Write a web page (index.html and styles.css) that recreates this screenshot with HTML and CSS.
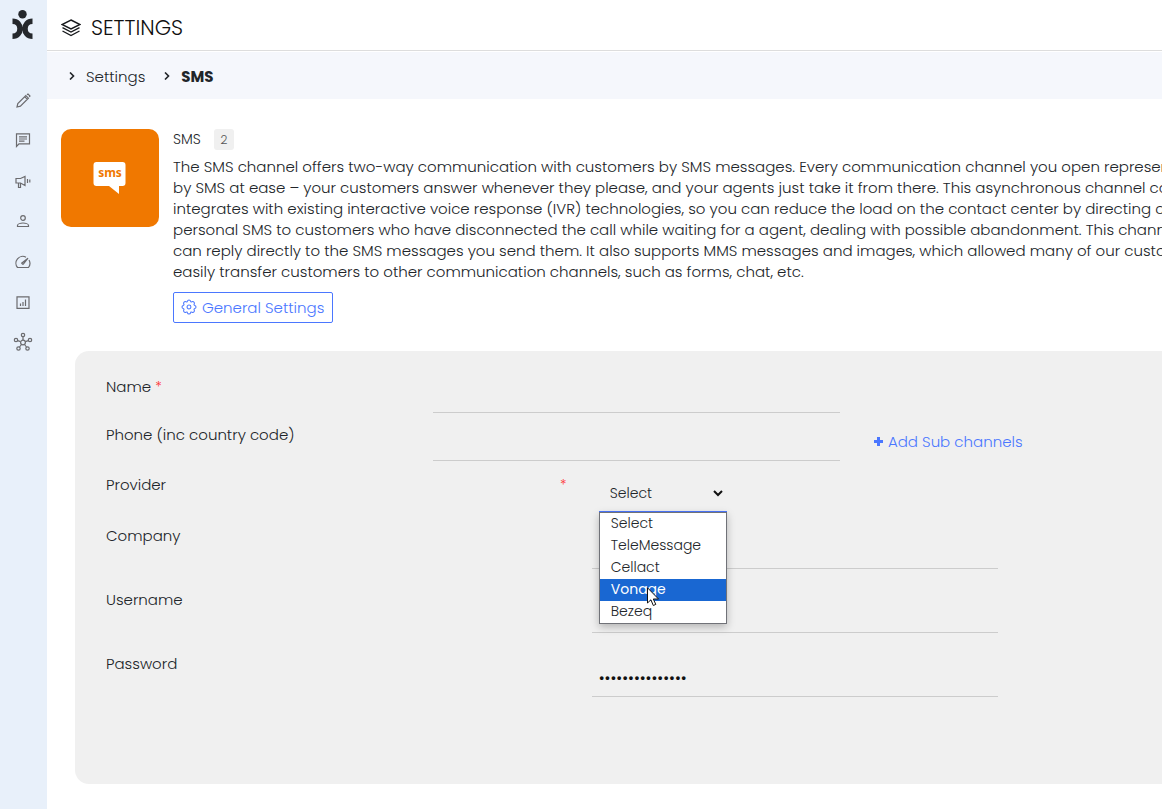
FILE: index.html
```html
<!DOCTYPE html>
<html lang="en">
<head>
<meta charset="utf-8">
<title>Settings</title>
<link rel="stylesheet" href="styles.css">
</head>
<body>
<div class="app">
  <nav class="sidebar" aria-label="Main">
    <a class="logo" href="#" aria-label="Home">
      <svg width="21" height="30" viewBox="0 0 21 30"><circle cx="10.500" cy="4.200" r="4.200" fill="#25282c"/><path d="M.5 11.200C5.500 11.200 8 14.800 8 18.700S5.500 26.200 .5 26.200M20.500 11.200C15.500 11.200 13 14.800 13 18.700S15.500 26.200 20.500 26.200" stroke="#25282c" stroke-width="5.500"/></svg>
    </a>
    <a class="nav-item" href="#" aria-label="Compose"><svg width="16" height="16" viewBox="0 0 16 16"><path d="M2 14l.8-3.400L10.800 2.600l2.600 2.600-8 8zM9.700 3.700l2.600 2.600M12 1.800l1-.8 2 2-.8 1"/></svg></a>
    <a class="nav-item" href="#" aria-label="Chats"><svg width="16" height="16" viewBox="0 0 16 16"><path d="M1.500 13.500V.8h13v10H4zM4 3.800h8M4 6h8M4 8.200h5.500"/></svg></a>
    <a class="nav-item" href="#" aria-label="Campaigns"><svg width="16" height="16" viewBox="0 0 16 16"><path d="M1 5.500h4.500L10 3.500v9L5.500 10H1zM3.500 10v4.500h2V10M12.500 6v4M14.800 6.500v3"/></svg></a>
    <a class="nav-item" href="#" aria-label="Contacts"><svg width="16" height="16" viewBox="0 0 16 16"><circle cx="8" cy="5" r="2.300"/><path d="M2.500 13.500v-1c0-1.500 3-2.500 5.500-2.500s5.500 1 5.500 2.500v1z"/></svg></a>
    <a class="nav-item" href="#" aria-label="Performance"><svg width="16" height="16" viewBox="0 0 16 16"><path d="M11 4.200A6.800 6.800 0 0 0 2.500 14.500h11A6.800 6.800 0 0 0 14 7M7.500 11.200l-.8-1L13 5.200 8.300 11.200z"/></svg></a>
    <a class="nav-item" href="#" aria-label="Reports"><svg width="16" height="16" viewBox="0 0 16 16"><path d="M2 3.800h12v11.500H2zM5.500 10.500V13M8 9v4M10.500 6.500V13"/></svg></a>
    <a class="nav-item" href="#" aria-label="Integrations"><svg width="20" height="20" viewBox="0 -1 20 20"><circle cx="10" cy="10.500" r="2.400"/><circle cx="10" cy="3" r="1.700"/><circle cx="3" cy="8" r="1.700"/><circle cx="17" cy="8" r="1.700"/><circle cx="5.500" cy="16.500" r="1.700"/><circle cx="14.500" cy="16.500" r="1.700"/><path d="M10 4.700v3.400M4.600 8.600l3 1M15.400 8.600l-3 1M6.500 15l2-2.500M13.500 15l-2-2.500"/></svg></a>
  </nav>

  <main class="main">
    <header class="header">
      <svg class="layers" width="20" height="18" viewBox="0 0 20 18"><path d="M10 1l9 4.500-9 4.500-9-4.500zM1.500 8.700L10 13l8.500-4.300M1.500 12L10 16.500l8.500-4.500"/></svg>
      <h1 class="title">SETTINGS</h1>
    </header>
    <nav class="crumbs" aria-label="Breadcrumb">
      <svg class="chevron" width="6" height="8" viewBox="0 0 6 8"><path d="M1 .5L4.500 4 1 7.500"/></svg>
      <a class="crumb" href="#">Settings</a>
      <svg class="chevron" width="6" height="8" viewBox="0 0 6 8"><path d="M1 .5L4.500 4 1 7.500"/></svg>
      <strong class="crumb-current">SMS</strong>
    </nav>

    <section class="channel">
      <div class="tile">
        <svg width="34" height="32" viewBox="0 0 34 32"><path d="M3.500 0h26a3 3 0 0 1 3 3v18a3 3 0 0 1-3 3H26v8L16 24H3.500a3 3 0 0 1-3-3V3a3 3 0 0 1 3-3z" fill="#fff"/><text class="tile-text" x="17" y="15" text-anchor="middle">sms</text></svg>
      </div>
      <div class="channel-info">
        <div class="channel-head"><h2 class="channel-name">SMS</h2><span class="badge">2</span></div>
        <p class="description">The SMS channel offers two-way communication with customers by SMS messages. Every communication channel you open represents
by SMS at ease – your customers answer whenever they please, and your agents just take it from there. This asynchronous channel can
integrates with existing interactive voice response (IVR) technologies, so you can reduce the load on the contact center by directing calls
personal SMS to customers who have disconnected the call while waiting for a agent, dealing with possible abandonment. This channel
can reply directly to the SMS messages you send them. It also supports MMS messages and images, which allowed many of our customers
easily transfer customers to other communication channels, such as forms, chat, etc.</p>
        <button class="outline-button" type="button">
          <svg width="14" height="14" viewBox="0 0 16 16"><circle cx="8" cy="8" r="2.200"/><path d="M9.796 1.343c-.527-1.790-3.065-1.790-3.592 0l-.094.319a.873.873 0 0 1-1.255.520l-.292-.160c-1.640-.892-3.433.902-2.540 2.541l.159.292a.873.873 0 0 1-.520 1.255l-.319.094c-1.790.527-1.790 3.065 0 3.592l.319.094a.873.873 0 0 1 .520 1.255l-.160.292c-.892 1.640.901 3.434 2.541 2.540l.292-.159a.873.873 0 0 1 1.255.520l.094.319c.527 1.790 3.065 1.790 3.592 0l.094-.319a.873.873 0 0 1 1.255-.520l.292.160c1.640.893 3.434-.902 2.540-2.541l-.159-.292a.873.873 0 0 1 .520-1.255l.319-.094c1.790-.527 1.790-3.065 0-3.592l-.319-.094a.873.873 0 0 1-.520-1.255l.160-.292c.893-1.640-.902-3.433-2.541-2.540l-.292.159a.873.873 0 0 1-1.255-.520z"/></svg>
          General Settings
        </button>
      </div>
    </section>

    <form class="panel">
      <div class="row">
        <label class="label" for="name">Name <span class="required">*</span></label>
        <input class="field" id="name" type="text">
      </div>
      <div class="row">
        <label class="label" for="phone">Phone (inc country code)</label>
        <input class="field" id="phone" type="tel">
        <a class="add" href="#"><svg width="9" height="9" viewBox="0 0 9 9"><path d="M4.500 0v9M0 4.500h9"/></svg>Add Sub channels</a>
      </div>
      <div class="row row-provider">
        <label class="label" for="provider">Provider</label>
        <span class="required">*</span>
        <div class="picker">
          <select class="select" id="provider"><option>Select</option><option>TeleMessage</option><option>Cellact</option><option>Vonage</option><option>Bezeq</option></select>
          <svg class="select-arrow" width="10" height="7" viewBox="0 0 10 7"><path d="M1 1l4 4 4-4"/></svg>
          <ul class="menu" role="listbox">
            <li class="option" role="option">Select</li>
            <li class="option" role="option">TeleMessage</li>
            <li class="option" role="option">Cellact</li>
            <li class="option option-active" role="option" aria-selected="true">Vonage</li>
            <li class="option" role="option">Bezeq</li>
          </ul>
          <svg class="pointer" width="12" height="19" viewBox="0 0 12 19"><path d="M.5 .8v15.200l3.400-3.200L6.300 18.500l2.500-1.100-2.500-5.400h5.200z"/></svg>
        </div>
      </div>
      <div class="row row-wide">
        <label class="label" for="company">Company</label>
        <input class="field" id="company" type="text">
      </div>
      <div class="row row-wide">
        <label class="label" for="username">Username</label>
        <input class="field" id="username" type="text">
      </div>
      <div class="row row-wide">
        <label class="label" for="password">Password</label>
        <input class="field field-password" id="password" type="password" value="passwordsecret1">
      </div>
    </form>
  </main>
</div>
</body>
</html>
```
FILE: styles.css
```css
* { box-sizing: border-box; }

body {
  margin: 0;
  background: #fff;
  color: #212529;
  font: 300 15px/21px Poppins, Inter, sans-serif;
}

a { color: inherit; text-decoration: none; }
svg { display: block; flex: none; fill: none; }

.app { display: flex; min-height: 100vh; overflow: hidden; }

.sidebar {
  flex: none;
  width: 47px;
  padding-top: 10px;
  background: #e8f0fa;
}
.logo { display: flex; justify-content: center; height: 71px; padding-right: 2px; }
.nav-item { display: flex; align-items: center; justify-content: center; height: 40px; padding-right: 2px; }
.nav-item svg { stroke: #6b6b6e; stroke-width: 1.2; }

.main { flex: 1; min-width: 0; }

.header {
  display: flex;
  align-items: center;
  gap: 10px;
  height: 51px;
  padding: 5px 14px 0;
  border-bottom: 1px solid #ddd;
}
.layers { stroke: #17191c; stroke-width: 1.4; }
.title { margin: 0; font-size: 21px; line-height: 28px; font-weight: 300; color: #111; }

.crumbs {
  display: flex;
  align-items: center;
  height: 47px;
  margin-top: 1px;
  padding: 1px 22px 0;
  background: #f5f7fc;
}
.chevron { stroke: #212529; stroke-width: 1.6; }
.crumb { margin: 0 19px 0 11px; }
.crumb-current { margin-left: 11px; font-weight: 700; }

.channel { display: flex; gap: 14px; padding: 30px 0 0 14px; }
.tile {
  display: flex;
  flex: none;
  align-items: center;
  justify-content: center;
  width: 98px;
  height: 98px;
  border-radius: 10px;
  background: #f07800;
}
.tile-text { fill: #f07800; font: 700 12px "Noto Sans", sans-serif; }
.channel-info { min-width: 0; }
.channel-head { display: flex; align-items: center; gap: 13px; height: 21px; }
.channel-name { margin: 0; font-size: 14px; font-weight: 300; }
.badge { width: 20px; border-radius: 3px; background: #f0f0f0; color: #555; font-size: 12px; text-align: center; }
.description { margin: 6px 0 10px; white-space: pre; }
.outline-button {
  display: flex;
  align-items: center;
  gap: 6px;
  height: 31px;
  padding: 0 8px 1px;
  border: 1px solid #4b77ff;
  border-radius: 2px;
  background: #fff;
  color: #4b77ff;
  font: inherit;
}
.outline-button svg { stroke: #4b77ff; stroke-width: 1.2; overflow: visible; }

.panel {
  min-height: 433px;
  margin: 28px 0 25px 28px;
  padding: 14px 0 87px 31px;
  border-radius: 14px 0 0 14px;
  background: #f0f0f0;
}
.row { display: grid; grid-template-columns: 31% 38.5% 1fr; height: 48px; }
.label { padding-top: 11px; }
.required { color: #f33; font-size: 14px; }
.field {
  width: 100%;
  padding: 12px 7px 0;
  border: 0;
  border-bottom: 1px solid #ccc;
  border-radius: 0;
  outline: 0;
  background: transparent;
  color: #111;
  font: inherit;
}
.field-password { font-size: 16px; }
.add { display: flex; align-items: center; gap: 5px; padding: 8px 0 0 34px; color: #4b77ff; }
.add svg { stroke: #4b77ff; stroke-width: 3; }

.row-provider { grid-template-columns: 43% 3% 135px; height: 44px; }
.row-provider .label { padding-top: 13px; }
.row-provider .required { padding-top: 14px; }
.row-wide { grid-template-columns: 46% 38.5%; height: 64px; }
.row-wide .label { padding-top: 20px; }
.row-wide .field { padding-top: 28px; }

.picker { position: relative; margin-left: 7px; padding-top: 20px; }
.select {
  width: 100%;
  height: 24px;
  padding: 0 11px;
  border: 0;
  outline: 0;
  background: transparent;
  color: #212529;
  font: inherit;
  font-size: 14px;
  appearance: none;
}
.select-arrow { position: absolute; top: 29px; right: 4px; stroke: #111; stroke-width: 2; pointer-events: none; }
.menu {
  position: absolute;
  z-index: 1;
  top: 51px;
  left: 0;
  width: 100%;
  margin: 0;
  padding: 0;
  border: 1px solid #707278;
  background: #fff;
  box-shadow: 0 3px 8px rgba(0, 0, 0, 0.25), 0 -1px 0 #4b77ff;
  font-size: 14px;
  list-style: none;
}
.option { padding: 0 0 2px 11px; line-height: 20px; }
.option-active { background: #1967d2; color: #fff; font-weight: 400; }
.pointer { position: absolute; z-index: 2; top: 126px; left: 48px; fill: #fff; stroke: #111; }
```
